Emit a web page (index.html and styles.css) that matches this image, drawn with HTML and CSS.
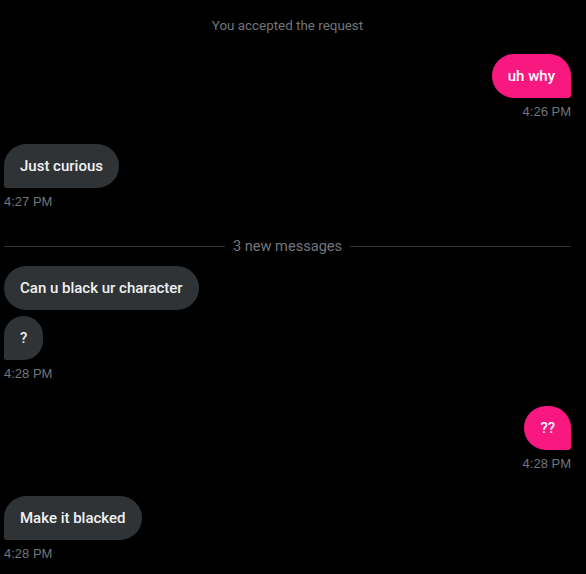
FILE: index.html
```html
<!DOCTYPE html>
<html>
<head>
<meta charset="utf-8">
<link rel="stylesheet" href="styles.css">
</head>
<body>
<div class="chat">
  <div class="notice">You accepted the request</div>

  <div class="group sent">
    <div class="bubble sent-bubble">uh why</div>
    <div class="time">4:26 PM</div>
  </div>

  <div class="group received">
    <div class="bubble recv-bubble last">Just curious</div>
    <div class="time">4:27 PM</div>
  </div>

  <div class="divider"><span class="line"></span><span class="divider-text">3 new messages</span><span class="line"></span></div>

  <div class="group received">
    <div class="bubble recv-bubble">Can u black ur character</div>
    <div class="bubble recv-bubble last">?</div>
    <div class="time">4:28 PM</div>
  </div>

  <div class="group sent">
    <div class="bubble sent-bubble">??</div>
    <div class="time">4:28 PM</div>
  </div>

  <div class="group received">
    <div class="bubble recv-bubble last">Make it blacked</div>
    <div class="time">4:28 PM</div>
  </div>
</div>
</body>
</html>
```
FILE: styles.css
```css
html, body {
  margin: 0;
  padding: 0;
  background: #000;
}
.chat {
  padding: 18px 15px 0 4px;
  display: flex;
  flex-direction: column;
  font-family: Roboto, "Liberation Sans", sans-serif;
}
.notice {
  text-align: center;
  color: #71767b;
  font-size: 13.4px;
  line-height: 16px;
  margin-bottom: 20px;
}
.group {
  display: flex;
  flex-direction: column;
  gap: 6px;
  margin-bottom: 24px;
}
.group.sent { align-items: flex-end; }
.group.received { align-items: flex-start; }
.bubble {
  font-size: 15px;
  font-weight: 500;
  line-height: 20px;
  padding: 12px 16px;
  color: #eff1f2;
  border-radius: 22px;
}
.sent-bubble {
  background: #f91880;
  color: #fff;
  border-bottom-right-radius: 3px;
}
.recv-bubble {
  background: #2f3336;
}
.recv-bubble.last {
  border-bottom-left-radius: 3px;
}
.time {
  font-family: "Liberation Sans", Arial, sans-serif;
  font-size: 13px;
  line-height: 16px;
  color: #71767b;
}
.divider {
  display: flex;
  align-items: center;
  gap: 8px;
  height: 20px;
  margin-top: 2px;
  margin-bottom: 10px;
}
.line {
  flex: 1;
  height: 1px;
  background: #2f3336;
}
.divider-text {
  color: #71767b;
  font-size: 14.6px;
  line-height: 20px;
}
```
